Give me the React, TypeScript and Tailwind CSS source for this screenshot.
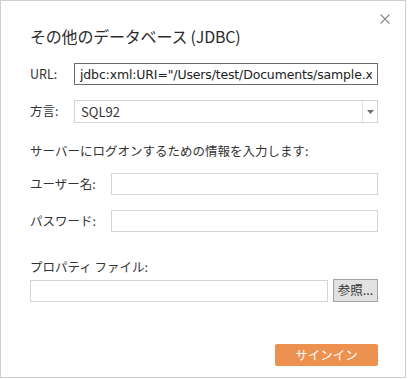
import { useState } from "react";

const jp = "font-['Noto_Sans_CJK_JP','Noto_Sans',sans-serif]";

export default function App() {
  const [url, setUrl] = useState('jdbc:xml:URI="/Users/test/Documents/sample.xml"');
  const [dialect, setDialect] = useState("SQL92");
  const [user, setUser] = useState("");
  const [password, setPassword] = useState("");
  const [propFile, setPropFile] = useState("");

  return (
    <div className={`w-[408px] h-[379px] bg-white ${jp} text-[#333]`}>
      <div className="relative w-[406px] h-[378px] border border-[#cfcfcf] bg-white pl-[29px] pr-[27px]">
        <button className="absolute right-[14px] top-[12px] w-[12px] h-[12px] flex items-center justify-center">
          <svg width="10" height="10" viewBox="0 0 10 10">
            <path d="M0.5 0.5 L9.5 9.5 M9.5 0.5 L0.5 9.5" stroke="#8a8a8a" strokeWidth="1.1" />
          </svg>
        </button>

        <h2 className="pt-[24px] text-[16px] leading-[23px] font-normal text-[#2b2b2b] tracking-[-0.2px]">
          その他のデータベース (JDBC)
        </h2>

        <div className="mt-[15px] flex items-center h-[22px]">
          <label className="w-[44px] text-[12.5px]">URL:</label>
          <input
            value={url}
            onChange={(e) => setUrl(e.target.value)}
            className="flex-1 h-[22px] border border-[#6b6b6b] px-[5px] text-[12.5px] font-['DejaVu_Sans',sans-serif] tracking-[-0.15px] text-[#222] outline-none"
          />
        </div>

        <div className="mt-[15px] flex items-center h-[23px]">
          <label className="w-[44px] text-[12.5px]">方言:</label>
          <div className="flex-1 h-[23px] border border-[#d4d4d4] flex items-center">
            <select
              value={dialect}
              onChange={(e) => setDialect(e.target.value)}
              className="flex-1 h-full appearance-none bg-transparent px-[6px] text-[13px] outline-none"
            >
              <option>SQL92</option>
            </select>
            <div className="w-[15px] h-full border-l border-[#e2e2e2] flex items-center justify-center">
              <svg width="7" height="4" viewBox="0 0 7 4">
                <path d="M0 0 H7 L3.5 4 Z" fill="#6e6e6e" />
              </svg>
            </div>
          </div>
        </div>

        <p className="mt-[19px] text-[12.5px] leading-[18px]">
          サーバーにログオンするための情報を入力します:
        </p>

        <div className="mt-[13px] flex items-center h-[22px]">
          <label className="w-[81px] text-[12.5px]">ユーザー名:</label>
          <input
            value={user}
            onChange={(e) => setUser(e.target.value)}
            className="flex-1 h-[22px] border border-[#d4d4d4] px-[5px] text-[13px] outline-none"
          />
        </div>

        <div className="mt-[15px] flex items-center h-[22px]">
          <label className="w-[81px] text-[12.5px]">パスワード:</label>
          <input
            type="password"
            value={password}
            onChange={(e) => setPassword(e.target.value)}
            className="flex-1 h-[22px] border border-[#d4d4d4] px-[5px] text-[13px] outline-none"
          />
        </div>

        <p className="mt-[26px] text-[12.5px] leading-[18px]">プロパティ ファイル:</p>

        <div className="mt-[3px] flex items-center gap-[5px] h-[23px]">
          <input
            value={propFile}
            onChange={(e) => setPropFile(e.target.value)}
            className="flex-1 h-[22px] border border-[#d4d4d4] px-[5px] text-[13px] outline-none"
          />
          <button className="w-[45px] h-[23px] border border-[#a3a3a3] bg-[#e1e1e1] text-[12.5px] leading-none text-[#333]">
            参照...
          </button>
        </div>

        <div className="mt-[42px] flex justify-end">
          <button className="w-[103px] h-[22px] rounded-[2px] bg-[#ec9150] text-[12.5px] leading-none text-white">
            サインイン
          </button>
        </div>
      </div>
    </div>
  );
}
